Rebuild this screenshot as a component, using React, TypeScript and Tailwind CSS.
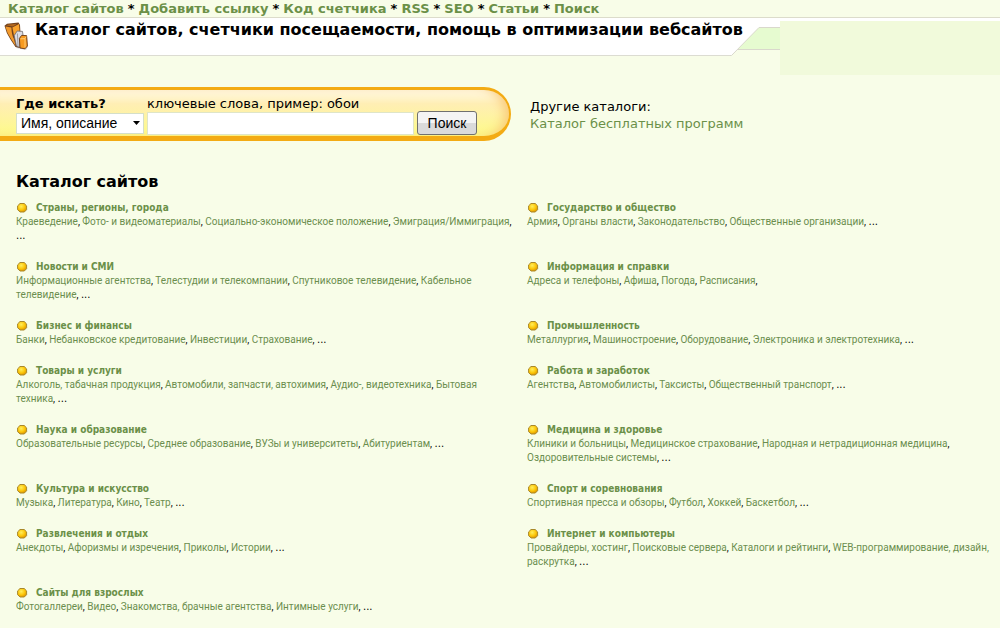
import React from "react";

type Category = { title: string; items: string[]; more?: boolean };

const nav = ["Каталог сайтов", "Добавить ссылку", "Код счетчика", "RSS", "SEO", "Статьи", "Поиск"];

const categories: Category[] = [
  { title: "Страны, регионы, города", items: ["Краеведение", "Фото- и видеоматериалы", "Социально-экономическое положение", "Эмиграция/Иммиграция"] },
  { title: "Государство и общество", items: ["Армия", "Органы власти", "Законодательство", "Общественные организации"] },
  { title: "Новости и СМИ", items: ["Информационные агентства", "Телестудии и телекомпании", "Спутниковое телевидение", "Кабельное телевидение"] },
  { title: "Информация и справки", items: ["Адреса и телефоны", "Афиша", "Погода", "Расписания"], more: false },
  { title: "Бизнес и финансы", items: ["Банки", "Небанковское кредитование", "Инвестиции", "Страхование"] },
  { title: "Промышленность", items: ["Металлургия", "Машиностроение", "Оборудование", "Электроника и электротехника"] },
  { title: "Товары и услуги", items: ["Алкоголь, табачная продукция", "Автомобили, запчасти, автохимия", "Аудио-, видеотехника", "Бытовая техника"] },
  { title: "Работа и заработок", items: ["Агентства", "Автомобилисты", "Таксисты", "Общественный транспорт"] },
  { title: "Наука и образование", items: ["Образовательные ресурсы", "Среднее образование", "ВУЗы и университеты", "Абитуриентам"] },
  { title: "Медицина и здоровье", items: ["Клиники и больницы", "Медицинское страхование", "Народная и нетрадиционная медицина", "Оздоровительные системы"] },
  { title: "Культура и искусство", items: ["Музыка", "Литература", "Кино", "Театр"] },
  { title: "Спорт и соревнования", items: ["Спортивная пресса и обзоры", "Футбол", "Хоккей", "Баскетбол"] },
  { title: "Развлечения и отдых", items: ["Анекдоты", "Афоризмы и изречения", "Приколы", "Истории"] },
  { title: "Интернет и компьютеры", items: ["Провайдеры, хостинг", "Поисковые сервера", "Каталоги и рейтинги", "WEB-программирование, дизайн, раскрутка"] },
  { title: "Сайты для взрослых", items: ["Фотогаллереи", "Видео", "Знакомства, брачные агентства", "Интимные услуги"] },
];

function Logo() {
  return (
    <svg className="ml-1 mt-1 h-7 w-6 shrink-0" viewBox="0 0 24 28" aria-hidden="true">
      <path d="M12 26 L22 28 L24 25 L23 14 Z" fill="#d5d5d5" />
      <path d="M0.5 3.8 L3 1.8 L14.5 0.6 L16 3 L16.5 12 L16 26 L11.5 25 L6.5 17.5 Q2 11 0.5 3.8Z" fill="#70401c" />
      <path d="M1.4 4.6 L7.4 5.4 Q7.6 13 10 17 L11.6 24 L7.4 17.4 Q2.8 11 1.4 4.6Z" fill="#f29a2c" />
      <path d="M2.4 3.6 L4 2.6 L13 1.8 L9 4.4Z" fill="#b0661e" />
      <path d="M8.4 5.6 L15 2 L15.6 9 L10 13.5Z" fill="#f9a22c" />
      <path d="M10.2 13.6 L13.2 9 L18.5 9.4 L19 13 L16 16 L16 25.4 L12.4 24Z" fill="#dcdce2" stroke="#706868" strokeWidth="0.8" />
      <path d="M13.4 11.5 L14 24" stroke="#9c9ca4" strokeWidth="1" />
      <path d="M15.4 16.4 L17.6 13.4 L22.6 13.6 L23.4 24 L21 26.8 L16 26Z" fill="#f79a1f" stroke="#6b3812" strokeWidth="0.9" />
      <path d="M16.6 16.8 L21 16.6 L22.2 14.6 M21 16.6 L21 25.4" stroke="#ffcf7c" strokeWidth="0.9" fill="none" />
    </svg>
  );
}

function Bullet() {
  return (
    <svg className="h-3 w-3 shrink-0" viewBox="0 0 12 12" aria-hidden="true">
      <defs>
        <radialGradient id="bullet" cx="40%" cy="35%" r="65%">
          <stop offset="0" stopColor="#ffee5c" />
          <stop offset="0.6" stopColor="#fcc80c" />
          <stop offset="1" stopColor="#e09a00" />
        </radialGradient>
      </defs>
      <path d="M4 1.5h4.2l2.4 2.4v3.8L8.3 10H4.1L1.6 7.7V3.9Z" fill="url(#bullet)" stroke="#a8882a" strokeWidth="1" strokeLinejoin="round" />
    </svg>
  );
}

function CategoryBlock({ title, items, more = true }: Category) {
  return (
    <section className="pb-[17px]">
      <h3 className="flex items-center gap-2 font-['DejaVu_Sans_Condensed','DejaVu_Sans',sans-serif] text-[10px] leading-[14px] font-bold">
        <Bullet />
        <a href="#">{title}</a>
      </h3>
      <p className="text-[10px] leading-[14px] text-black">
        {items.map((item, i) => (
          <React.Fragment key={item}>
            <a href="#" className="text-[#6b8e4e]">{item}</a>
            {i < items.length - 1 || more ? ", " : ","}
          </React.Fragment>
        ))}
        {more && <span className="font-['DejaVu_Sans',sans-serif] leading-none">...</span>}
      </p>
    </section>
  );
}

export default function App() {
  return (
    <div className="min-h-screen overflow-hidden bg-[#f8fde8] font-['DejaVu_Sans',sans-serif] text-[13px] text-black">
      <nav className="flex h-[18px] items-center gap-1 border-b border-[#dcdccb] pl-2 leading-4 font-bold whitespace-nowrap">
        {nav.map((label, i) => (
          <React.Fragment key={label}>
            {i > 0 && <span>*</span>}
            <a href="#" className="text-[#6b9048]">{label}</a>
          </React.Fragment>
        ))}
      </nav>

      <header className="flex items-start">
        <div className="relative z-10 flex h-[38px] min-w-0 grow items-start border-b border-[#dcdcd2] bg-white">
          <Logo />
          <h1 className="ml-[7px] text-[16px] leading-[23px] font-bold whitespace-nowrap">
            Каталог сайтов, счетчики посещаемости, помощь в оптимизации вебсайтов
          </h1>
        </div>
        <svg className="h-[38px] w-[50px] shrink-0" viewBox="0 0 50 38" aria-hidden="true">
          <path d="M0 0H50V9.5H29L1.5 37.5H0Z" fill="#fff" />
          <path d="M50 9.5H29L7.5 31.5H50Z" fill="#e6fbd0" />
          <path d="M50 9.5H29L1.5 37.5H0M7.5 31.5H50" fill="none" stroke="#d9d8cc" />
        </svg>
        <div className="h-[57px] w-[220px] shrink-0 border-t-3 border-white bg-[#f1fadb]" />
      </header>

      <div className="mt-3 flex items-start">
        <form
          className="flex h-[54px] w-[511px] shrink-0 items-start gap-[3px] rounded-r-[27px] border-t-3 border-r-2 border-b-5 border-[#f3ab14] bg-linear-to-b from-[#fffbe8] via-[#ffeeb4] via-30% to-[#fdfb86] pt-1.5 pl-4 shadow-[inset_-8px_0_12px_-4px_#f9c878]"
          onSubmit={(e) => e.preventDefault()}
        >
          <div className="flex w-32 flex-col">
            <label htmlFor="scope" className="h-4 leading-4 font-bold">Где искать?</label>
            <span className="relative mt-px block">
              <select id="scope" className="h-[21px] w-full appearance-none border border-[#d5dfc8] bg-white pb-0.5 pl-1 font-['Liberation_Sans',sans-serif] text-[14px] leading-none">
                <option>Имя, описание</option>
              </select>
              <svg className="pointer-events-none absolute top-2 right-1 h-1 w-[7px]" viewBox="0 0 7 4" aria-hidden="true">
                <path d="M0 0H7L3.5 4Z" />
              </svg>
            </span>
          </div>
          <div className="flex w-[267px] flex-col">
            <label htmlFor="query" className="h-4 leading-4 whitespace-nowrap">ключевые слова, пример: обои</label>
            <input id="query" type="text" className="h-[23px] w-full border border-[#dfe5c8] bg-white px-1" />
          </div>
          <button type="submit" className="mt-[15px] h-6 w-[60px] rounded-[3px] border border-[#707070] bg-linear-to-b from-[#f4f4f4] from-50% to-[#dadada] to-50% font-['Liberation_Sans',sans-serif] text-[14px] leading-none">
            Поиск
          </button>
        </form>
        <div className="pt-[11px] pl-[19px] leading-[17px]">
          <p>Другие каталоги:</p>
          <a href="#" className="text-[#6b9048]">Каталог бесплатных программ</a>
        </div>
      </div>

      <main className="pl-4 text-[#6b9048]">
        <h2 className="mt-[31px] pb-[9px] text-[16px] leading-5 font-bold text-black">Каталог сайтов</h2>
        <div className="grid grid-cols-[499fr_473fr] gap-x-3 font-['Roboto',sans-serif]">
          {categories.map((c) => (
            <CategoryBlock key={c.title} {...c} />
          ))}
        </div>
      </main>
    </div>
  );
}
